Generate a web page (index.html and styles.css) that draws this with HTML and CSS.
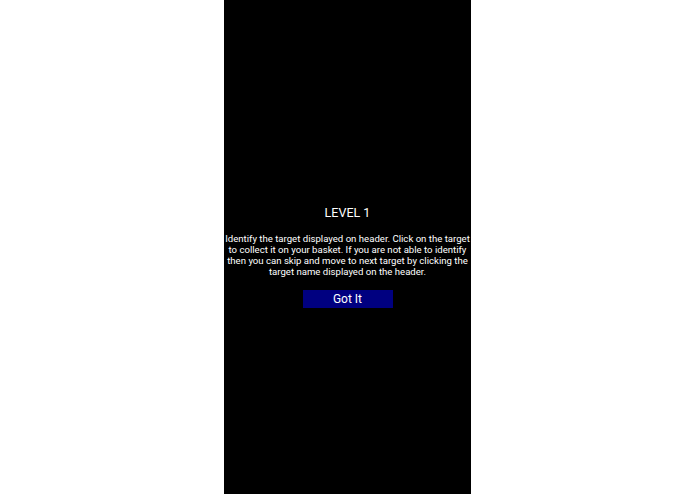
FILE: index.html
```html
<!DOCTYPE html>
<html>
<head>
<meta charset="utf-8">
<link rel="stylesheet" href="styles.css">
</head>
<body>
<div class="panel">
  <div class="dialog">
    <div class="title">LEVEL 1</div>
    <p class="message">Identify the target displayed on header. Click on the target to collect it on your basket. If you are not able to identify then you can skip and move to next target by clicking the target name displayed on the header.</p>
    <button class="got-it">Got It</button>
  </div>
</div>
</body>
</html>
```
FILE: styles.css
```css
html, body {
  margin: 0;
  padding: 0;
  background: #ffffff;
  height: 100%;
}
body {
  display: flex;
  justify-content: center;
  font-family: Roboto, "Liberation Sans", sans-serif;
}
.panel {
  width: 247px;
  height: 494px;
  background: #000000;
  color: #ffffff;
}
.dialog {
  display: flex;
  flex-direction: column;
  align-items: center;
  padding-top: 205px;
  text-align: center;
}
.title {
  font-size: 12.5px;
  line-height: 16px;
  margin: 0;
}
.message {
  font-size: 9.6px;
  line-height: 11px;
  margin: 12px 0 0 0;
  width: 247px;
}
.got-it {
  margin-top: 12.5px;
  width: 90px;
  height: 18px;
  padding: 0;
  border: none;
  background: #000080;
  color: #ffffff;
  font-family: Roboto, "Liberation Sans", sans-serif;
  font-size: 12px;
  line-height: 18px;
}
```
